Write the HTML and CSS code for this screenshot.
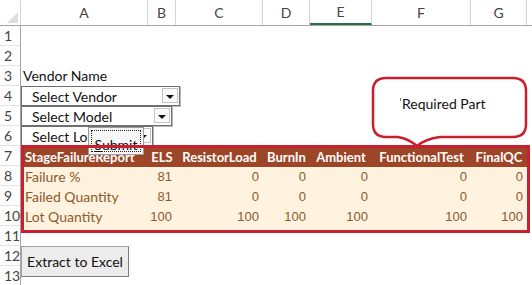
FILE: index.html
```html
<!DOCTYPE html>
<html lang="en">
<head>
    <meta charset="UTF-8">
    <title>Stage Failure Report</title>
    <link rel="stylesheet" href="styles.css">
</head>
<body>
    <div class="sheet">
        <div class="corner"></div>
        <div class="colheads">
            <div class="ch col-a">A</div>
            <div class="ch col-b">B</div>
            <div class="ch col-c">C</div>
            <div class="ch col-d">D</div>
            <div class="ch col-e active">E</div>
            <div class="ch col-f">F</div>
            <div class="ch col-g">G</div>
            <div class="ch col-rest"></div>
        </div>
        <div class="rowheads">
            <div class="rh">1</div>
            <div class="rh">2</div>
            <div class="rh">3</div>
            <div class="rh">4</div>
            <div class="rh">5</div>
            <div class="rh">6</div>
            <div class="rh">7</div>
            <div class="rh">8</div>
            <div class="rh">9</div>
            <div class="rh">10</div>
            <div class="rh">11</div>
            <div class="rh">12</div>
            <div class="rh">13</div>
        </div>

        <div class="cells">
            <div class="label">Vendor Name</div>

            <div class="combo combo-vendor"><span>Select Vendor</span><i class="drop"></i></div>
            <div class="combo combo-model"><span>Select Model</span><i class="drop"></i></div>
            <div class="combo combo-lot"><span>Select Lot</span><i class="drop"></i></div>

            <button class="submit"><span><u>S</u>ubmit</span></button>

            <div class="report">
                <div class="rrow rhead">
                    <div class="first">StageFailureReport</div>
                    <div>ELS</div>
                    <div>ResistorLoad</div>
                    <div>BurnIn</div>
                    <div>Ambient</div>
                    <div>FunctionalTest</div>
                    <div>FinalQC</div>
                </div>
                <div class="rbody">
                    <div class="rrow">
                        <div class="first">Failure %</div>
                        <div class="num">81</div>
                        <div class="num">0</div>
                        <div class="num">0</div>
                        <div class="num">0</div>
                        <div class="num">0</div>
                        <div class="num">0</div>
                    </div>
                    <div class="rrow">
                        <div class="first">Failed Quantity</div>
                        <div class="num">81</div>
                        <div class="num">0</div>
                        <div class="num">0</div>
                        <div class="num">0</div>
                        <div class="num">0</div>
                        <div class="num">0</div>
                    </div>
                    <div class="rrow">
                        <div class="first">Lot Quantity</div>
                        <div class="num">100</div>
                        <div class="num">100</div>
                        <div class="num">100</div>
                        <div class="num">100</div>
                        <div class="num">100</div>
                        <div class="num">100</div>
                    </div>
                </div>
            </div>

            <div class="callout">
                <svg width="158" height="73" viewBox="0 0 158 73">
                    <path d="M15 2 H142 Q155 2 155 15 V48 Q155 61 142 61 H69 Q54 63 46 70 Q38 63 27 61 H15 Q2 61 2 48 V15 Q2 2 15 2 Z"
                          fill="#fff" stroke="#c8202f" stroke-width="2.5"/>
                </svg>
                <span class="callout-text"><i class="tick"></i>Required Part</span>
            </div>

            <button class="extract">Extract to Excel</button>
        </div>
    </div>
</body>
</html>
```

FILE: styles.css
```css
body {
    margin: 0;
    background: white;
    font-family: Lato, "Open Sans", sans-serif;
    overflow: hidden;
}
.sheet {
    display: grid;
    grid-template-columns: 21px 1fr;
    grid-template-rows: 26px auto;
    width: 532px;
    height: 285px;
    overflow: hidden;
}
.corner {
    position: relative;
    border-right: 1px solid #d4d4d4;
    border-bottom: 1px solid #a5a5a5;
    box-sizing: border-box;
}
.corner::after {
    content: "";
    position: absolute;
    right: 2px;
    bottom: 2px;
    border-left: 11px solid transparent;
    border-bottom: 11px solid #dfdfdf;
}
.colheads {
    display: flex;
    border-bottom: 1px solid #a5a5a5;
}
.ch {
    flex: none;
    box-sizing: border-box;
    height: 25px;
    line-height: 26px;
    text-align: center;
    font-size: 14px;
    color: #444;
    border-right: 1px solid #d4d4d4;
}
.ch.active {
    border-bottom: 2px solid #217346;
    line-height: 24px;
}
.col-a { width: 127px; }
.col-b { width: 28px; }
.col-c { width: 87px; }
.col-d { width: 47px; }
.col-e { width: 62px; }
.col-f { width: 99px; }
.col-g { width: 56px; }
.col-rest { flex: 1; border-right: none; }

.rowheads {
    border-right: 1px solid #a5a5a5;
}
.rh {
    height: 20px;
    box-sizing: border-box;
    border-bottom: 1px solid #e3e3e3;
    padding-left: 4px;
    line-height: 20px;
    font-size: 14px;
    color: #444;
}

.cells {
    position: relative;
    padding-top: 40px;
}
.label {
    height: 20px;
    line-height: 20px;
    padding-left: 2px;
    font-size: 14px;
    color: #111;
}

.combo {
    display: flex;
    align-items: stretch;
    box-sizing: border-box;
    height: 20px;
    border: 1px solid #6f6f6f;
    box-shadow: 1px 1px 0 #b8b8b8;
    background: white;
    font-size: 14px;
    color: #111;
}
.combo span {
    flex: 1;
    padding-left: 10px;
    line-height: 19px;
    white-space: nowrap;
    overflow: hidden;
}
.combo-vendor { width: 159px; }
.combo-model { width: 151px; }
.combo-lot { width: 132px; }
.drop {
    position: relative;
    width: 14px;
    margin: 1px 1px 2px 0;
    border: 1px solid #c4c4c4;
    background: #fafafa;
}
.drop::after {
    content: "";
    position: absolute;
    left: 3px;
    top: 6px;
    border-left: 4px solid transparent;
    border-right: 4px solid transparent;
    border-top: 4px solid #111;
}

.submit {
    position: absolute;
    left: 67px;
    top: 101px;
    z-index: 1;
    width: 56px;
    height: 28px;
    padding: 2px;
    border: 1px solid #9c9c9c;
    background: #f6f6f6;
    font-family: Lato, "Open Sans", sans-serif;
    font-size: 14px;
    color: #111;
}
.submit span {
    display: block;
    height: 100%;
    box-sizing: border-box;
    border: 1px dotted #222;
    padding-top: 7px;
    line-height: 14px;
}

.report {
    position: relative;
    width: 509px;
    box-sizing: border-box;
    margin-top: -1px;
    padding: 3px;
}
.report::after {
    content: "";
    position: absolute;
    inset: 0;
    z-index: 2;
    border: 3px solid #c8202f;
}
.rrow {
    display: grid;
    grid-template-columns: 124px 28px 87px 47px 62px 99px 56px;
    height: 20px;
    line-height: 20px;
    white-space: nowrap;
}
.rrow > div {
    overflow: hidden;
}
.rhead {
    height: 19px;
    line-height: 19px;
    background: #9e4527;
    color: white;
    font-weight: bold;
    font-size: 13px;
    text-align: center;
}
.rhead .first {
    text-align: left;
    padding-left: 1px;
}
.rbody {
    background: #fff2df;
    padding-bottom: 3px;
    color: #8c5a2c;
}
.rbody .first {
    font-size: 14px;
    padding-left: 1px;
}
.num {
    text-align: right;
    padding-right: 4px;
    font-family: "Liberation Sans", Arial, sans-serif;
    font-size: 13px;
}

.callout {
    position: absolute;
    left: 350px;
    top: 50px;
    z-index: 3;
    width: 158px;
    height: 73px;
}
.callout svg {
    position: absolute;
    left: 0;
    top: 0;
}
.callout-text {
    position: absolute;
    left: 31px;
    top: 19px;
    font-size: 14px;
    color: #111;
}
.tick {
    position: absolute;
    left: -2px;
    top: 3px;
    width: 1px;
    height: 3px;
    background: #777;
}

.extract {
    display: block;
    margin-top: 13px;
    width: 108px;
    height: 31px;
    border: 1px solid #a3a3a3;
    border-right-color: #7d7d7d;
    border-bottom-color: #7d7d7d;
    background: #ececec;
    font-family: Lato, "Open Sans", sans-serif;
    font-size: 14px;
    color: #111;
    padding: 0;
}
```
